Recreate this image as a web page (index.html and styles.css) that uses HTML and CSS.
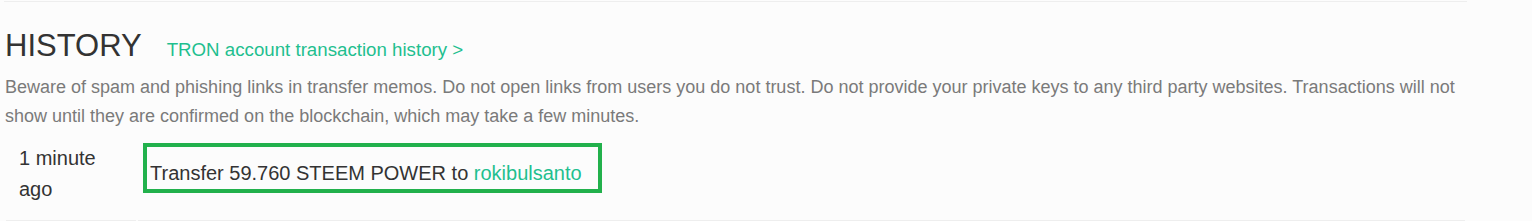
FILE: index.html
```html
<!DOCTYPE html>
<html lang="en">
<head>
  <meta charset="UTF-8">
  <title>Wallet History</title>
  <link rel="stylesheet" href="styles.css">
</head>
<body>
  <div class="wallet">
    <div class="history-head">
      <h2>HISTORY</h2>
      <a class="tron-link" href="#">TRON account transaction history &gt;</a>
    </div>
    <p class="warning">Beware of spam and phishing links in transfer memos. Do not open links from users you do not trust. Do not provide your private keys to any third party websites. Transactions will not show until they are confirmed on the blockchain, which may take a few minutes.</p>
    <table class="history-table">
      <tr>
        <td class="time">1 minute ago</td>
        <td class="op">
          <span class="marked">Transfer 59.760 STEEM POWER to <a href="#">rokibulsanto</a></span>
        </td>
      </tr>
    </table>
  </div>
</body>
</html>
```

FILE: styles.css
```css
body {
  margin: 0;
  background-color: #fcfcfc;
  font-family: "Liberation Sans", Arial, sans-serif;
  color: #333;
}

a {
  color: #1fbf8f;
  text-decoration: none;
}

.wallet {
  width: 1463px;
  margin: 1px 0 0 4px;
  border-top: 1px solid #eee;
}

.history-head {
  display: flex;
  align-items: baseline;
  gap: 25px;
  margin-top: 27px;
  padding-left: 1px;
}

.history-head h2 {
  margin: 0;
  font-size: 31px;
  font-weight: normal;
  line-height: 34px;
  color: #333;
}

.tron-link {
  font-size: 18.7px;
}

.warning {
  margin: 10px 0 0 1px;
  font-size: 18px;
  line-height: 29px;
  color: #7a7a7a;
}

.history-table {
  border-collapse: separate;
  border-spacing: 2px 0;
  width: 1463px;
  font-size: 20px;
}

.history-table td {
  vertical-align: top;
  padding: 12px 0 15px 0;
  border-bottom: 1px solid #eee;
}

.history-table .time {
  width: 100px;
  padding-left: 13px;
  padding-right: 17px;
  line-height: 31px;
}

.history-table .op {
  padding-left: 5px;
}

.marked {
  display: inline-block;
  border: 4px solid #22b14c;
  padding: 14px 16px 4px 3px;
  line-height: 24px;
}
```
